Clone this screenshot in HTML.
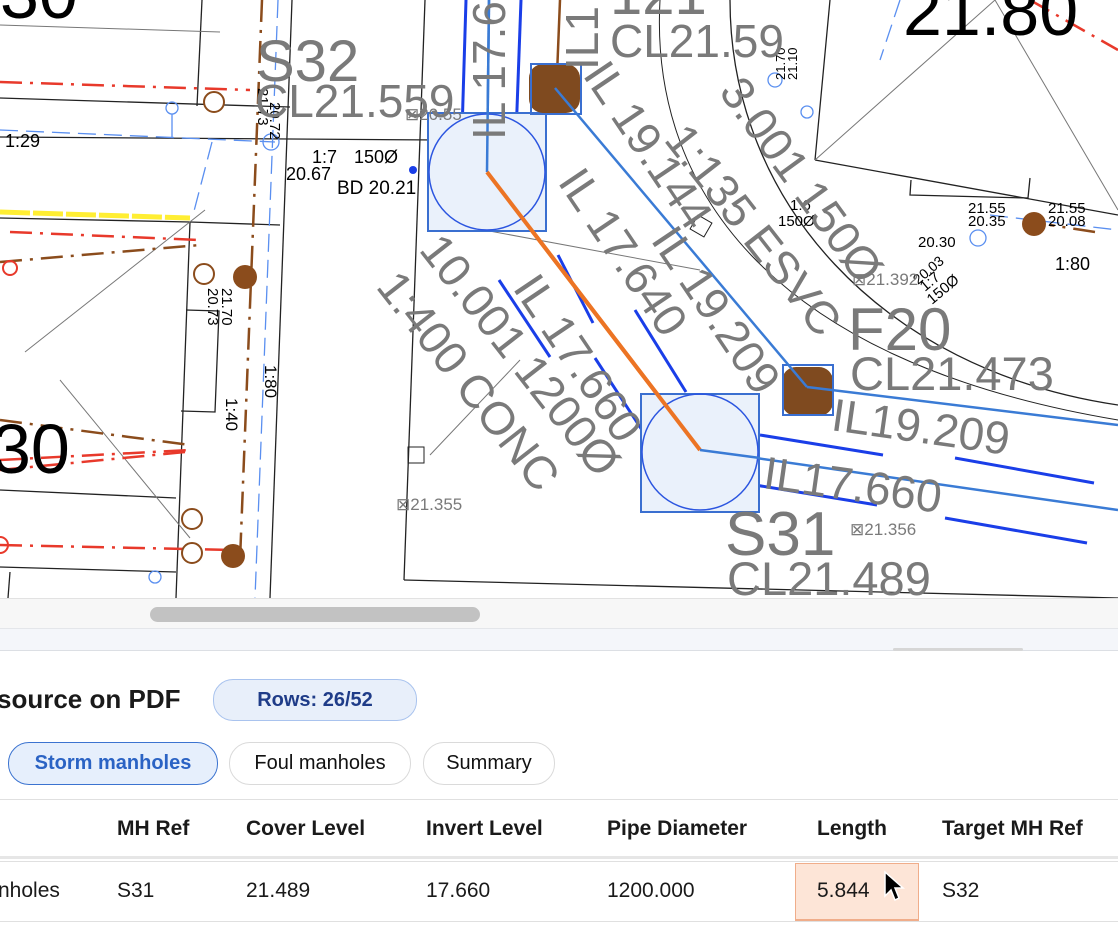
<!DOCTYPE html>
<html><head><meta charset="utf-8"><style>
html,body{margin:0;padding:0;width:1118px;height:930px;overflow:hidden;background:#fff;font-family:"Liberation Sans",Arial,sans-serif;}
#draw{position:absolute;left:0;top:0;width:1118px;height:598px;overflow:hidden;background:#fff}
#sb{position:absolute;left:0;top:598px;width:1118px;height:30px;background:#f7f7f7;border-top:1px solid #e2e2e2}
#thumb{position:absolute;left:150px;top:8px;width:330px;height:15px;border-radius:8px;background:#c2c2c2}
#strip{position:absolute;left:0;top:628px;width:1118px;height:21px;background:#f4f6fa;border-top:1px solid #e4e6ea;border-bottom:1px solid #dcdfe4}
#grip{position:absolute;left:893px;top:648px;width:130px;height:3px;background:#d6d6d6;border-radius:2px}
.t{position:absolute;white-space:nowrap;color:#111}
#title{left:-3px;top:684px;font-size:26px;font-weight:bold;color:#1a1a1a}
#badge{position:absolute;left:213px;top:679px;width:202px;height:40px;border:1px solid #a9c3ee;background:#e8effa;border-radius:20px;color:#1f3c88;font-weight:bold;font-size:20px;text-align:center;line-height:40px}
.tab{position:absolute;top:742px;height:41px;border:1px solid #dadada;border-radius:21px;background:#fff;font-size:20px;line-height:41px;text-align:center;color:#111}
.act{border-color:#3b73d0;background:#e6effc;color:#2b63c4;font-weight:bold}
.h{top:817px;font-size:21px;font-weight:bold;color:#1a1a1a}
.d{top:879px;font-size:21px;color:#1a1a1a}
.hl{position:absolute;left:0;width:1118px;height:1px;background:#e0e0e0}
</style></head><body>
<div id="draw">
<svg width="1118" height="598" viewBox="0 0 1118 598" xmlns="http://www.w3.org/2000/svg" font-family="Liberation Sans, Arial, sans-serif">
<g stroke="#222" stroke-width="1.3" fill="none">
<line x1="0" y1="98" x2="290" y2="107"/>
<line x1="202" y1="0" x2="197" y2="106"/>
<line x1="292" y1="0" x2="270" y2="598"/>
<line x1="0" y1="218" x2="190" y2="222"/>
<line x1="190" y1="222" x2="280" y2="225"/>
<line x1="190" y1="222" x2="176" y2="598"/>
<polyline points="186,310 219,311 215,412 181,411"/>
<line x1="0" y1="490" x2="176" y2="498"/>
<line x1="0" y1="567" x2="176" y2="572"/>
<line x1="10" y1="572" x2="8" y2="598"/>
<line x1="425" y1="0" x2="404" y2="580"/>
<line x1="404" y1="580" x2="1118" y2="598"/>
<line x1="830" y1="0" x2="815" y2="160"/>
<line x1="815" y1="160" x2="1118" y2="215"/>
<polyline points="911,180 910,195 1028,198 1030,178"/>
<path d="M730,0 C730,200 880,370 1118,405" />
<path d="M660,0 C650,180 760,360 1118,420" stroke-width="1"/>
<line x1="0" y1="137" x2="440" y2="140"/>
</g>
<g stroke="#777" stroke-width="1" fill="none">
<line x1="0" y1="25" x2="220" y2="32"/>
<line x1="25" y1="352" x2="205" y2="210"/>
<line x1="60" y1="380" x2="190" y2="538"/>
<line x1="815" y1="160" x2="995" y2="0"/>
<line x1="995" y1="0" x2="1118" y2="210"/>
<line x1="430" y1="220" x2="700" y2="270"/>
<line x1="430" y1="455" x2="520" y2="360"/>
</g>
<line x1="0" y1="212" x2="190" y2="218" stroke="#ffee33" stroke-width="5" stroke-dasharray="30 3"/>
<g stroke="#e8392b" stroke-width="2.5" fill="none" stroke-dasharray="22 8 3 8">
<line x1="0" y1="82" x2="250" y2="90"/>
<line x1="10" y1="232" x2="200" y2="240"/>
<line x1="0" y1="470" x2="185" y2="452"/>
<line x1="0" y1="545" x2="235" y2="550"/>
<line x1="1030" y1="0" x2="1118" y2="50"/>
<line x1="0" y1="460" x2="190" y2="450"/>
</g>
<g stroke="#8b4c1c" stroke-width="2.5" fill="none" stroke-dasharray="22 8 3 8">
<line x1="262" y1="0" x2="240" y2="560"/>
<line x1="0" y1="262" x2="200" y2="245"/>
<line x1="0" y1="420" x2="190" y2="445"/>
<line x1="1095" y1="232" x2="1050" y2="225"/>
</g>
<g stroke="#5a8ff0" stroke-width="1.3" fill="none" stroke-dasharray="18 8">
<line x1="0" y1="130" x2="275" y2="142"/>
<line x1="278" y1="0" x2="255" y2="598"/>
<line x1="212" y1="142" x2="193" y2="215"/>
<line x1="900" y1="0" x2="880" y2="60"/>
<line x1="990" y1="215" x2="1118" y2="230"/>
</g>
<g stroke="#5a8ff0" stroke-width="1.3" fill="none">
<circle cx="172" cy="108" r="6"/><line x1="172" y1="114" x2="172" y2="138"/>
<circle cx="271" cy="142" r="8"/>
<circle cx="155" cy="577" r="6"/>
<circle cx="775" cy="80" r="7"/>
<circle cx="807" cy="112" r="6"/>
<circle cx="978" cy="238" r="8"/>
</g>
<g stroke="#8b4c1c" stroke-width="2" fill="#fff">
<circle cx="214" cy="102" r="10"/><circle cx="204" cy="274" r="10"/>
<circle cx="192" cy="519" r="10"/><circle cx="192" cy="553" r="10"/>
</g>
<g stroke="#e8392b" stroke-width="2" fill="none"><circle cx="10" cy="268" r="7"/><circle cx="0" cy="545" r="8"/></g>
<g fill="#8b4c1c"><circle cx="245" cy="277" r="12"/><circle cx="233" cy="556" r="12"/><circle cx="1034" cy="224" r="12"/></g>
<g stroke="#1a3ee8" stroke-width="3" fill="none">
<line x1="466" y1="0" x2="462" y2="132"/>
<line x1="521" y1="0" x2="516" y2="136"/>
<line x1="499" y1="280" x2="550" y2="357"/>
<line x1="558" y1="255" x2="593" y2="323"/>
<line x1="595" y1="358" x2="642" y2="430"/>
<line x1="635" y1="310" x2="686" y2="392"/>
<line x1="760" y1="435" x2="883" y2="455"/>
<line x1="955" y1="458" x2="1094" y2="483"/>
<line x1="755" y1="485" x2="877" y2="505"/>
<line x1="945" y1="518" x2="1087" y2="543"/>
</g>
<g stroke="#3a7bd5" stroke-width="2.5" fill="none">
<line x1="489" y1="0" x2="487" y2="172"/>
<line x1="700" y1="450" x2="1118" y2="510"/>
</g>
<line x1="487" y1="172" x2="700" y2="450" stroke="#ec7424" stroke-width="4"/>
<line x1="560" y1="0" x2="556" y2="100" stroke="#8b4c1c" stroke-width="2.5"/>
<g stroke="#3a6fd0" stroke-width="2" fill="#eaf1fb">
<rect x="428" y="113" width="118" height="118"/>
<rect x="641" y="394" width="118" height="118"/>
</g>
<g stroke="#2b55e0" stroke-width="1.5" fill="none"><circle cx="487" cy="172" r="58"/><circle cx="700" cy="452" r="58"/></g>
<line x1="487" y1="172" x2="489" y2="0" stroke="#3a7bd5" stroke-width="2.5"/>
<line x1="487" y1="172" x2="700" y2="450" stroke="#ec7424" stroke-width="4"/>
<line x1="700" y1="450" x2="760" y2="458" stroke="#3a7bd5" stroke-width="2.5"/>
<rect x="529" y="64" width="51" height="49" rx="14" fill="#7f4a1f"/>
<rect x="782" y="367" width="51" height="49" rx="14" fill="#7f4a1f"/>
<g stroke="#3a6fd0" stroke-width="2" fill="none"><rect x="531" y="64" width="50" height="50"/><rect x="783" y="365" width="50" height="50"/></g>
<line x1="555" y1="88" x2="807" y2="387" stroke="#3a7bd5" stroke-width="2.5"/>
<line x1="807" y1="387" x2="1118" y2="425" stroke="#3a7bd5" stroke-width="2.5"/>
<circle cx="413" cy="170" r="4" fill="#1a3ee8"/>
<rect x="408" y="447" width="16" height="16" fill="none" stroke="#222"/>
<rect x="693" y="218" width="16" height="16" fill="none" stroke="#222" transform="rotate(30 701 226)"/>
<g fill="#000">
<text x="0" y="18" font-size="70">30</text>
<text x="-8" y="473" font-size="70">30</text>
<text x="903" y="35" font-size="70">21.80</text>
</g>
<g fill="#000" font-size="18">
<text x="5" y="147">1:29</text>
<text x="312" y="163">1:7</text><text x="354" y="163">150Ø</text>
<text x="286" y="180">20.67</text><text x="337" y="194" font-size="19">BD 20.21</text>
<text x="968" y="213" font-size="15">21.55</text><text x="968" y="226" font-size="15">20.35</text>
<text x="1048" y="213" font-size="15">21.55</text><text x="1048" y="226" font-size="15">20.08</text>
<text x="918" y="247" font-size="15">20.30</text>
<text x="1055" y="270">1:80</text>
<text x="790" y="210" font-size="15">1:6</text><text x="778" y="226" font-size="15">150Ø</text>
<text transform="translate(258,88) rotate(90)" font-size="15">21.73</text>
<text transform="translate(270,102) rotate(90)" font-size="15" >20.72</text>
<text transform="translate(222,288) rotate(90)" font-size="15">21.70</text>
<text transform="translate(208,288) rotate(90)" font-size="15">20.73</text>
<text transform="translate(265,365) rotate(90)" font-size="17">1:80</text>
<text transform="translate(226,398) rotate(90)" font-size="17">1:40</text>
<text transform="translate(785,80) rotate(-90)" font-size="13">21.70</text>
<text transform="translate(797,80) rotate(-90)" font-size="13">21.10</text>
<text transform="translate(918,285) rotate(-40)" font-size="14">20.03</text>
<text transform="translate(925,292) rotate(-40)" font-size="15">1:7</text>
<text transform="translate(932,305) rotate(-40)" font-size="15">150Ø</text>
</g>
<g fill="#7a7a7a">
<text x="256" y="81" font-size="58">S32</text>
<text x="255" y="117" font-size="46">CL21.559</text>
<text x="610" y="57" font-size="46">CL21.59</text>
<text x="610" y="14" font-size="58">121</text>
<text x="848" y="350" font-size="60">F20</text>
<text x="850" y="390" font-size="47">CL21.473</text>
<text transform="translate(830,430) rotate(8)" font-size="46">IL19.209</text>
<text transform="translate(762,488) rotate(8)" font-size="46">IL17.660</text>
<text x="725" y="555" font-size="62">S31</text>
<text x="727" y="595" font-size="47">CL21.489</text>
<text transform="translate(582,75) rotate(56)" font-size="46">IL 19.144</text>
<text transform="translate(663,140) rotate(52)" font-size="46">1:135 ESVC</text>
<text transform="translate(718,92) rotate(54)" font-size="46">3.001 150Ø</text>
<text transform="translate(557,182) rotate(56)" font-size="46">IL 17.640</text>
<text transform="translate(650,240) rotate(56)" font-size="46">IL 19.209</text>
<text transform="translate(512,288) rotate(56)" font-size="46">IL 17.660</text>
<text transform="translate(418,250) rotate(52)" font-size="46">10.001 1200Ø</text>
<text transform="translate(375,287) rotate(52)" font-size="46">1:400 CONC</text>
<text transform="translate(505,140) rotate(-90)" font-size="46">IL 17.6</text>
<text transform="translate(598,70) rotate(-90)" font-size="46">IL1</text>
<text x="396" y="510" font-size="17">⊠21.355</text>
<text x="850" y="535" font-size="17">⊠21.356</text>
<text x="852" y="285" font-size="17">⊠21.392</text>
<text x="405" y="120" font-size="17">⊠20.55</text>
</g>
</svg>
</div>
<div id="sb"><div id="thumb"></div></div>
<div id="strip"></div>
<div id="grip"></div>
<div class="t" id="title">source on PDF</div>
<div id="badge">Rows: 26/52</div>
<div class="tab act" style="left:8px;width:208px">Storm manholes</div>
<div class="tab" style="left:229px;width:180px">Foul manholes</div>
<div class="tab" style="left:423px;width:130px">Summary</div>
<div class="hl" style="top:799px"></div>
<div class="t h" style="left:117px">MH Ref</div>
<div class="t h" style="left:246px">Cover Level</div>
<div class="t h" style="left:426px">Invert Level</div>
<div class="t h" style="left:607px">Pipe Diameter</div>
<div class="t h" style="left:817px">Length</div>
<div class="t h" style="left:942px">Target MH Ref</div>
<div class="hl" style="top:856px;height:3px;background:#e6e6e6"></div>
<div class="hl" style="top:861px"></div>
<div style="position:absolute;left:795px;top:863px;width:122px;height:55px;background:#fde5d7;border:1px solid #f0ad8a;border-bottom:2px solid #f0ad8a"></div>
<div class="t d" style="left:-2px">nholes</div>
<div class="t d" style="left:117px">S31</div>
<div class="t d" style="left:246px">21.489</div>
<div class="t d" style="left:426px">17.660</div>
<div class="t d" style="left:607px">1200.000</div>
<div class="t d" style="left:817px">5.844</div>
<div class="t d" style="left:942px">S32</div>
<div class="hl" style="top:921px"></div>
<svg style="position:absolute;left:883px;top:870px" width="24" height="34" viewBox="0 0 24 34"><path d="M2,2 L2,26 L8,20 L12,30 L16,28 L12,18 L20,18 Z" fill="#000" stroke="#fff" stroke-width="1.5"/></svg>
</body></html>
